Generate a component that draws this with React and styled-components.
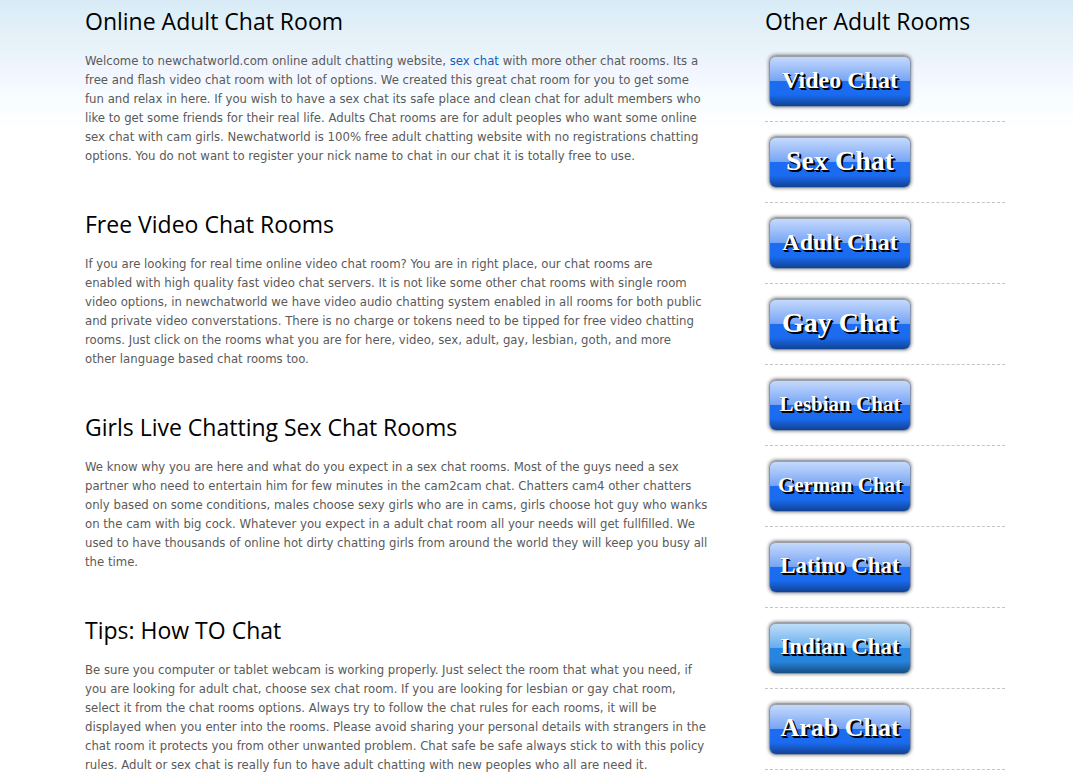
import React from "react";
import styled, { createGlobalStyle } from "styled-components";

const GlobalStyle = createGlobalStyle`
  * { box-sizing: border-box; }
  body {
    margin: 0;
    background: #fff linear-gradient(#d8e9f5, #dbeef7 10px, #e5f0f7 35px, #e9f3fa 52px, #f1f5ff 70px, #f8fdff 98px, #fff 132px) no-repeat;
    background-size: 100% 132px;
    color: #5a5a5a;
    font: 13px/19px "DejaVu Sans Condensed", "Open Sans", sans-serif;
  }
`;

const Page = styled.div`
  display: flex;
  gap: 50px;
  max-width: 961px;
  margin: 0 auto;
  padding: 7px 12px 0 29px;
`;

const Main = styled.main`
  flex: 1;
  display: flex;
  flex-direction: column;
  gap: 45px;
`;

const Heading = styled.h2`
  margin: 0;
  color: #000;
  font-family: "Open Sans", sans-serif;
  font-size: 23px;
  font-weight: 400;
  line-height: 29px;
`;

const Copy = styled.p`
  margin: 15px 0 0;
  white-space: pre-line;
`;

const TextLink = styled.a`
  color: #0b62bb;
  text-decoration: none;
`;

const Sidebar = styled.aside`
  flex: 0 0 240px;
`;

const RoomList = styled.ul`
  list-style: none;
  margin: 5px 0 0;
  padding: 0;
`;

const RoomItem = styled.li`
  padding: 14px 4px;
  border-bottom: 1px dashed #c4c4c4;
`;

const blueFace = "linear-gradient(#cbdefd, #78a5f5 49%, #1b6df0 50%, #1b6bf0 76%, #103f8c)";
const skyFace = "linear-gradient(#c5e1fa, #68aeee 49%, #2686e4 50%, #2784dc 76%, #154a7c)";

const RoomButton = styled.a`
  display: flex;
  align-items: center;
  justify-content: center;
  width: 142px;
  height: 52px;
  padding-bottom: 3px;
  border: 1px solid #8793a8;
  border-top: 2px solid #9a9fa8;
  border-radius: 7px;
  background: ${(p) => (p.$sky ? skyFace : blueFace)};
  background-origin: border-box;
  box-shadow: 0 0 3px 1px rgba(90, 90, 90, 0.5);
  color: #fff;
  font: bold ${(p) => p.$size}px/30px "Liberation Serif", serif;
  text-decoration: none;
  text-shadow: 1px 1px 0 #000, 2px 2px 0 #000;
  white-space: nowrap;
`;

const sections = [
  {
    title: "Free Video Chat Rooms",
    body: `If you are looking for real time online video chat room? You are in right place, our chat rooms are
enabled with high quality fast video chat servers. It is not like some other chat rooms with single room
video options, in newchatworld we have video audio chatting system enabled in all rooms for both public
and private video converstations. There is no charge or tokens need to be tipped for free video chatting
rooms. Just click on the rooms what you are for here, video, sex, adult, gay, lesbian, goth, and more
other language based chat rooms too.`,
  },
  {
    title: "Girls Live Chatting Sex Chat Rooms",
    body: `We know why you are here and what do you expect in a sex chat rooms. Most of the guys need a sex
partner who need to entertain him for few minutes in the cam2cam chat. Chatters cam4 other chatters
only based on some conditions, males choose sexy girls who are in cams, girls choose hot guy who wanks
on the cam with big cock. Whatever you expect in a adult chat room all your needs will get fullfilled. We
used to have thousands of online hot dirty chatting girls from around the world they will keep you busy all
the time.`,
  },
  {
    title: "Tips: How TO Chat",
    body: `Be sure you computer or tablet webcam is working properly. Just select the room that what you need, if
you are looking for adult chat, choose sex chat room. If you are looking for lesbian or gay chat room,
select it from the chat rooms options. Always try to follow the chat rules for each rooms, it will be
displayed when you enter into the rooms. Please avoid sharing your personal details with strangers in the
chat room it protects you from other unwanted problem. Chat safe be safe always stick to with this policy
rules. Adult or sex chat is really fun to have adult chatting with new peoples who all are need it.`,
  },
];

const rooms = [
  { name: "Video Chat", size: 24 },
  { name: "Sex Chat", size: 28 },
  { name: "Adult Chat", size: 24 },
  { name: "Gay Chat", size: 28 },
  { name: "Lesbian Chat", size: 21 },
  { name: "German Chat", size: 21 },
  { name: "Latino Chat", size: 23 },
  { name: "Indian Chat", size: 23, sky: true },
  { name: "Arab Chat", size: 26 },
];

export default function App() {
  return (
    <>
      <GlobalStyle />
      <Page>
        <Main>
          <section>
            <Heading>Online Adult Chat Room</Heading>
            <Copy>
              {"Welcome to newchatworld.com online adult chatting website, "}
              <TextLink href="#sex-chat">sex chat</TextLink>
              {` with more other chat rooms. Its a
free and flash video chat room with lot of options. We created this great chat room for you to get some
fun and relax in here. If you wish to have a sex chat its safe place and clean chat for adult members who
like to get some friends for their real life. Adults Chat rooms are for adult peoples who want some online
sex chat with cam girls. Newchatworld is 100% free adult chatting website with no registrations chatting
options. You do not want to register your nick name to chat in our chat it is totally free to use.`}
            </Copy>
          </section>
          {sections.map((s) => (
            <section key={s.title}>
              <Heading>{s.title}</Heading>
              <Copy>{s.body}</Copy>
            </section>
          ))}
        </Main>
        <Sidebar>
          <Heading>Other Adult Rooms</Heading>
          <RoomList>
            {rooms.map((r) => (
              <RoomItem key={r.name}>
                <RoomButton href="#room" $size={r.size} $sky={r.sky}>
                  {r.name}
                </RoomButton>
              </RoomItem>
            ))}
          </RoomList>
        </Sidebar>
      </Page>
    </>
  );
}
